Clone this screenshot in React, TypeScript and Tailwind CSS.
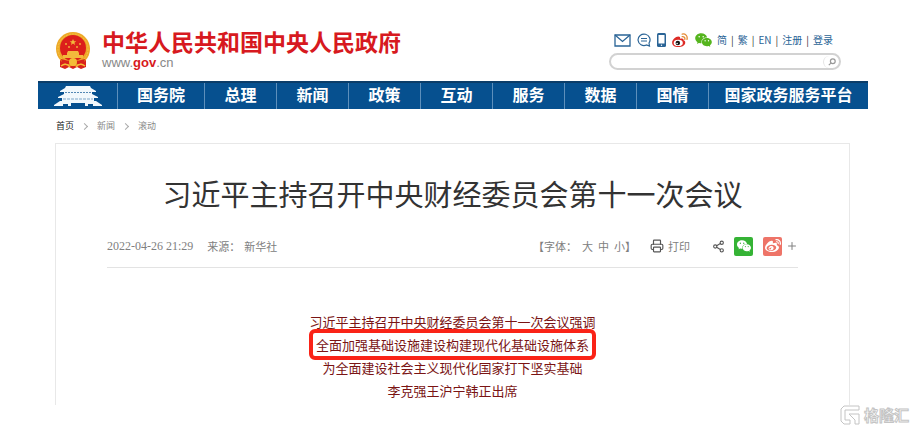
import React from "react";
import { Printer, Share2, Plus } from "lucide-react";
import { AiFillWechat } from "react-icons/ai";
import { FaWeibo } from "react-icons/fa";

const navItems = ["国务院", "总理", "新闻", "政策", "互动", "服务", "数据", "国情", "国家政务服务平台"];

const userLinks = ["简", "繁", "EN", "注册", "登录"];

const Emblem = () => (
  <svg viewBox="0 0 36 38" className="w-9 h-[38px] shrink-0" aria-hidden="true">
    <path d="M5 25 L5 35 L10 37 L14 35 L18 37 L22 35 L26 37 L31 35 L31 25 Z" fill="#d8211c" />
    <circle cx="18" cy="17" r="17" fill="#eda928" />
    <circle cx="18" cy="17" r="15" fill="none" stroke="#f5c544" strokeWidth="1" strokeDasharray="2 1" />
    <circle cx="18" cy="16" r="13" fill="#dc1f1b" />
    <path d="M18 7l1 2.200h2.300l-1.900 1.500.7 2.300-2.100-1.400-2.100 1.400.7-2.300-1.900-1.500H17z" fill="#f3b93c" />
    <g fill="#f3b93c">
      <circle cx="11" cy="12" r="0.900" />
      <circle cx="14" cy="15" r="0.900" />
      <circle cx="22" cy="15" r="0.900" />
      <circle cx="25" cy="12" r="0.900" />
      <path d="M13 19h10l1 2H12zM12 21h12v2H12zM8 23h20v3H8z" />
    </g>
    <path d="M6 27 Q18 31 30 27 L29 31 Q18 34 7 31 Z" fill="#d8211c" />
    <circle cx="18" cy="30" r="4" fill="#f4bc36" />
    <path d="M6 34q5-4 9 1M30 34q-5-4-9 1" fill="none" stroke="#f4bc36" strokeWidth="1.500" />
  </svg>
);

const Gate = () => (
  <svg viewBox="0 0 48 20" className="w-12 h-5" aria-hidden="true">
    <g fill="#f2f8fc">
      <path d="M12 0h24l1 2 5 3v1H6V5l5-3z" />
      <path d="M10 6h28v2l6 3v1H4v-1l6-3z" />
      <path d="M8 12h32v3h2l6 4v1h-9v-2h-5v2h-3v-3H17v3h-3v-2H9v2H0v-1l6-4h2z" />
    </g>
    <path d="M11 6.500h26" stroke="#5588b4" strokeWidth="1" strokeDasharray="2 1" />
    <path d="M9 13h30" stroke="#7ea6c8" strokeWidth="1" strokeDasharray="3 1" />
  </svg>
);

const MailIcon = () => (
  <svg viewBox="0 0 17 13" className="w-[17px] h-[13px]" fill="none" stroke="currentColor" strokeWidth="1.300" aria-hidden="true">
    <path d="M1 1h15v11H1z" />
    <path d="M1 1l7.500 6.500L16 1" />
  </svg>
);

const MessageIcon = () => (
  <svg viewBox="0 0 14 14" className="w-[14px] h-[14px]" fill="none" stroke="currentColor" aria-hidden="true">
    <path d="M9.500 12A6 5.700 0 1 1 12 10l.5 3z" strokeWidth="1.200" />
    <path d="M4 5.500h6M4 8h6" strokeWidth="1.200" />
  </svg>
);

const PhoneIcon = () => (
  <svg viewBox="0 0 9 14" className="w-[9px] h-[14px]" aria-hidden="true">
    <rect width="9" height="14" rx="1.500" fill="currentColor" />
    <path d="M1.500 2h6v8.500h-6z" fill="#fff" />
    <circle cx="4.500" cy="12.200" r="0.700" fill="#fff" />
  </svg>
);

const WeiboColor = () => (
  <svg viewBox="0 0 18 16" className="w-4 h-[14px]" aria-hidden="true">
    <path d="M7 4C4 4 0 8 0 11c0 3 3 5 7 5s8-2 8-5c0-1.600-1-2.300-2-2.600 .6-1.900-1.100-2.900-4-1.700C9.600 5 8.800 4 7 4z" fill="#dd2a25" />
    <ellipse cx="7" cy="11.300" rx="5.200" ry="3.600" fill="#fff" />
    <circle cx="6.500" cy="11.500" r="2.600" fill="#151515" />
    <circle cx="5.700" cy="12" r="0.900" fill="#fff" />
    <path d="M11.500 4.200c2-.4 3.500 1 3 3M11.500 1.200c3.500-.8 6.500 2.200 5.500 6" fill="none" stroke="#e58b35" strokeWidth="1.500" strokeLinecap="round" />
  </svg>
);

const Watermark = () => (
  <div className="flex items-center gap-1 text-[#c4c4c4]">
    <svg viewBox="0 0 20 20" className="w-5 h-5" fill="none" stroke="currentColor" aria-hidden="true">
      <path d="M19 1H4L1 4v12l3 3h6v-4H5V5h14zM9 9h10v10h-4v-4l-6-6z" strokeWidth="1" strokeLinejoin="round" />
    </svg>
    <span className="text-[15px] leading-5 font-bold text-white [-webkit-text-stroke:1px_#c4c4c4]">格隆汇</span>
  </div>
);

const Header = () => (
  <header className="flex justify-between h-[81px] pl-[17px] pr-[27px]">
    <a href="#" className="flex gap-[11px] pt-8">
      <Emblem />
      <div className="-mt-1">
        <div className="text-[23px] leading-[27px] font-bold text-[#d71920] whitespace-nowrap">
          中华人民共和国中央人民政府
        </div>
        <div className="font-['Liberation_Sans',sans-serif] text-[13px] leading-4 text-[#888]">
          www.<span className="font-bold text-[#d71920]">gov</span>.cn
        </div>
      </div>
    </a>
    <div className="w-[232px] pt-8">
      <div className="flex items-center h-4 pl-[5px] text-[#2a6496]">
        <div className="flex items-center gap-[6px]">
          <MailIcon />
          <MessageIcon />
          <PhoneIcon />
          <WeiboColor />
          <AiFillWechat className="w-[19px] h-5 text-[#55b51e]" />
        </div>
        <nav className="flex items-center pl-1 text-[10px] leading-4 whitespace-nowrap">
          {userLinks.map((link, index) => (
            <React.Fragment key={link}>
              {index > 0 && <span className="px-1 text-[#333]">|</span>}
              <a href="#">{link}</a>
            </React.Fragment>
          ))}
        </nav>
      </div>
      <form className="flex items-center mt-[5px] h-[17px] rounded-full border-2 border-[#d2d2d2] bg-white">
        <input type="text" aria-label="搜索" className="flex-1 min-w-0 h-3 px-2 text-[10px] outline-none" />
        <button type="button" aria-label="搜索" className="flex items-center justify-center w-4 h-3 border-l border-[#e5e5e5] rounded-full text-[#999]">
          <svg viewBox="0 0 10 10" className="w-2 h-2" fill="none" stroke="currentColor" strokeWidth="1.500" aria-hidden="true">
            <circle cx="6" cy="4" r="3" />
            <path d="M4 6L1 9" />
          </svg>
        </button>
      </form>
    </div>
  </header>
);

const NavBar = () => (
  <nav className="grid grid-cols-[79fr_87fr_repeat(7,72fr)_160fr] h-7 bg-[#06508f] border-t-2 border-[#0b3d69] text-white text-base font-bold leading-[22px] whitespace-nowrap">
    <a href="#" aria-label="首页" className="flex items-center justify-center">
      <Gate />
    </a>
    {navItems.map((item) => (
      <a key={item} href="#" className="flex items-center justify-center pb-1 border-l border-[#5d8fbb]">
        {item}
      </a>
    ))}
  </nav>
);

const Breadcrumb = () => (
  <div className="flex items-center gap-2 h-[34px] pl-[18px] text-[9px] text-[#888]">
    <a href="#" className="text-[#222]">首页</a>
    <span className="w-[5px] h-[5px] mr-[2px] border-t border-r border-[#aaa] rotate-45" />
    <a href="#">新闻</a>
    <span className="w-[5px] h-[5px] mr-[2px] border-t border-r border-[#aaa] rotate-45" />
    <a href="#">滚动</a>
  </div>
);

const ArticleMeta = () => (
  <div className="flex items-center justify-between h-[43px] border-b border-[#e3e3e3] text-[11px] text-[#808080] whitespace-nowrap">
    <div className="flex items-center">
      <time className="font-['Liberation_Serif',serif] text-xs">2022-04-26 21:29</time>
      <span className="pl-[14px]">来源：</span>
      <span className="pl-1">新华社</span>
    </div>
    <div className="flex items-center">
      <div className="flex items-center gap-[5px]">
        <span>【字体：</span>
        <button type="button">大</button>
        <button type="button">中</button>
        <button type="button">小</button>
        <span className="-ml-[5px]">】</span>
      </div>
      <button type="button" className="flex items-center gap-1 ml-[14px]">
        <Printer className="w-[14px] h-[14px] text-[#555]" />
        打印
      </button>
      <button type="button" aria-label="分享" className="ml-[22px]">
        <Share2 className="w-[13px] h-[13px] text-[#555]" />
      </button>
      <button type="button" aria-label="微信" className="flex items-center justify-center w-[19px] h-[19px] ml-[9px] rounded-xs bg-[#35b335] text-white">
        <AiFillWechat className="w-4 h-4" />
      </button>
      <button type="button" aria-label="微博" className="flex items-center justify-center w-[19px] h-[19px] ml-[10px] rounded-xs bg-[#ee7468] text-white">
        <FaWeibo className="w-4 h-4" />
      </button>
      <button type="button" aria-label="更多" className="ml-1">
        <Plus className="w-3 h-3" />
      </button>
    </div>
  </div>
);

const Article = () => (
  <main className="ml-[17px] mr-[18px] border border-b-0 border-[#e8e8e8] px-[51px]">
    <h1 className="pt-7 text-[29px] leading-[42px] text-center text-[#333] whitespace-nowrap">
      习近平主持召开中央财经委员会第十一次会议
    </h1>
    <div className="pt-[11px]">
      <ArticleMeta />
    </div>
    <div className="flex flex-col items-center pt-[42px] pb-[3px] text-[13px] leading-[23px] text-[#7a1414] whitespace-nowrap">
      <p>习近平主持召开中央财经委员会第十一次会议强调</p>
      <p className="-my-1 px-[3px] border-4 border-[#fa2317] rounded-md">
        全面加强基础设施建设构建现代化基础设施体系
      </p>
      <p>为全面建设社会主义现代化国家打下坚实基础</p>
      <p>李克强王沪宁韩正出席</p>
    </div>
  </main>
);

const App = () => {
  return (
    <div className="bg-white font-['Noto_Sans_CJK_SC',sans-serif]">
      <div className="pl-[38px] pr-[47px]">
        <Header />
        <NavBar />
        <Breadcrumb />
        <Article />
      </div>
      <footer className="flex justify-end pr-[6px]">
        <Watermark />
      </footer>
    </div>
  );
};

export default App;
